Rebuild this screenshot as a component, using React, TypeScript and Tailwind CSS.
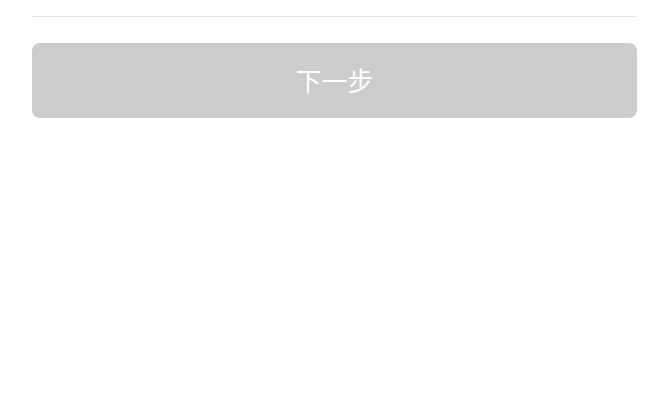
export default function App() {
  return (
    <div className="w-[670px] h-[415px] bg-white px-[32px] pt-[16px]" style={{ fontFamily: '"Noto Sans CJK SC", "Liberation Sans", sans-serif' }}>
      <div className="w-[605px] h-px bg-[#e6e6e6]" />
      <button className="mt-[26px] w-[605px] h-[75px] rounded-[8px] bg-[#cccccc] text-white text-[26px] leading-none flex items-center justify-center pb-[2px]">
        下一步
      </button>
    </div>
  );
}
